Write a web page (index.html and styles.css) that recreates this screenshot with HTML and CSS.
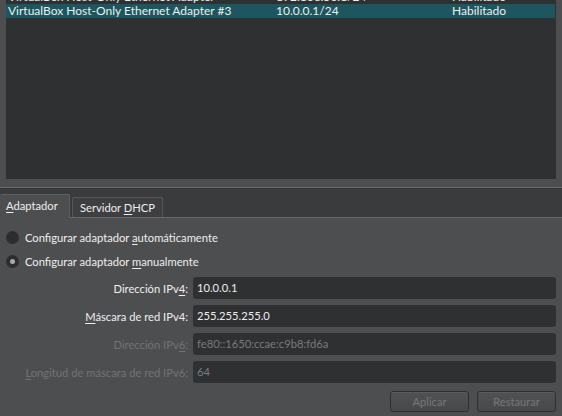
FILE: index.html
```html
<!DOCTYPE html>
<html>
<head>
<meta charset="utf-8">
<link rel="stylesheet" href="styles.css">
</head>
<body>
<div class="list">
  <div class="rows">
    <div class="row"><span class="c1">VirtualBox Host-Only Ethernet Adapter</span><span class="c2">192.168.56.1/24</span><span class="c3">Habilitado</span></div>
    <div class="row sel"><span class="c1">VirtualBox Host-Only Ethernet Adapter #3</span><span class="c2">10.0.0.1/24</span><span class="c3">Habilitado</span></div>
  </div>
</div>
<div class="tabbar">
  <div class="tab active"><u>A</u>daptador</div>
  <div class="tab">Servidor <u>D</u>HCP</div>
</div>
<div class="panel">
  <div class="radio-row"><span class="radio"></span><span>Configurar adaptador <u>a</u>utomáticamente</span></div>
  <div class="radio-row"><span class="radio on"></span><span>Configurar adaptador <u>m</u>anualmente</span></div>
  <div class="form">
    <label class="lbl">Dirección IPv<u>4</u>:</label><div class="field">10.0.0.1</div>
    <label class="lbl"><u>M</u>áscara de red IPv4:</label><div class="field">255.255.255.0</div>
    <label class="lbl dis">Dirección IPv<u>6</u>:</label><div class="field dis">fe80::1650:ccae:c9b8:fd6a</div>
    <label class="lbl dis"><u>L</u>ongitud de máscara de red IPv6:</label><div class="field dis">64</div>
  </div>
  <div class="buttons">
    <button class="btn">Aplicar</button>
    <button class="btn">Restaurar</button>
  </div>
</div>
</body>
</html>
```
FILE: styles.css
```css
html, body {
  margin: 0;
  padding: 0;
  background: #4d4e50;
  font-family: Lato, "Noto Sans", sans-serif;
  font-size: 11.2px;
  color: #eeeeee;
  width: 562px;
  height: 416px;
  overflow: hidden;
}
u { text-decoration: underline; text-underline-offset: 2px; }
.list {
  margin: 0 6px;
  height: 179px;
  background: #2f3032;
  overflow: hidden;
  font-size: 12px;
}
.rows { margin-top: -10px; }
.row {
  display: flex;
  height: 14px;
  line-height: 14px;
  padding-left: 2px;
  white-space: nowrap;
}
.row.sel { background: #1d565e; margin-right: 1px; }
.c1 { width: 268px; }
.c2 { width: 176px; }
.c3 { flex: 1; }
.tabbar {
  margin-top: 8px;
  height: 29px;
  border-top: 1px solid #67686a;
  border-bottom: 1px solid #67686a;
  background: #3a3b3d;
  display: flex;
  align-items: flex-end;
  gap: 2px;
  box-shadow: inset 0 1px 0 #333436;
}
.tab {
  height: 19px;
  line-height: 19px;
  padding: 0 7px;
  background: #3e3f41;
  border: 1px solid #565759;
  border-bottom: none;
  border-radius: 2px 2px 0 0;
}
.tab.active {
  height: 23px;
  line-height: 22px;
  width: 57px;
  padding: 0 6px 0 6px;
  background: #4d4e50;
  border-color: #5f6062;
  border-left: none;
  margin-bottom: -1px;
  position: relative;
}
.panel { padding: 7px 6px 0 6px; }
.radio-row {
  display: flex;
  align-items: center;
  gap: 6px;
  height: 24px;
}
.radio {
  width: 13px;
  height: 13px;
  border-radius: 50%;
  background: #2c2d2f;
  display: flex;
  align-items: center;
  justify-content: center;
}
.radio.on::after {
  content: "";
  width: 5px;
  height: 5px;
  border-radius: 50%;
  background: #a9aaab;
}
.form {
  margin-top: 4px;
  display: grid;
  grid-template-columns: 182px 1fr;
  column-gap: 5px;
  row-gap: 6px;
  align-items: center;
}
.lbl { text-align: right; color: #eeeeee; }
.lbl.dis { color: #727375; }
.field {
  height: 22px;
  line-height: 22px;
  background: #2f3032;
  border-radius: 3px;
  padding: 0 4px;
  color: #eeeeee;
}
.field.dis { color: #7a7b7d; }
.buttons {
  display: flex;
  justify-content: flex-end;
  gap: 8px;
  margin-top: 8px;
}
.btn {
  width: 79px;
  height: 21px;
  font: inherit;
  color: #767779;
  background: linear-gradient(#505153, #48494b);
  border: 1px solid #2e2f31;
  border-radius: 3px;
  box-shadow: inset 0 1px 0 #5a5b5d;
  padding: 0;
}
```
